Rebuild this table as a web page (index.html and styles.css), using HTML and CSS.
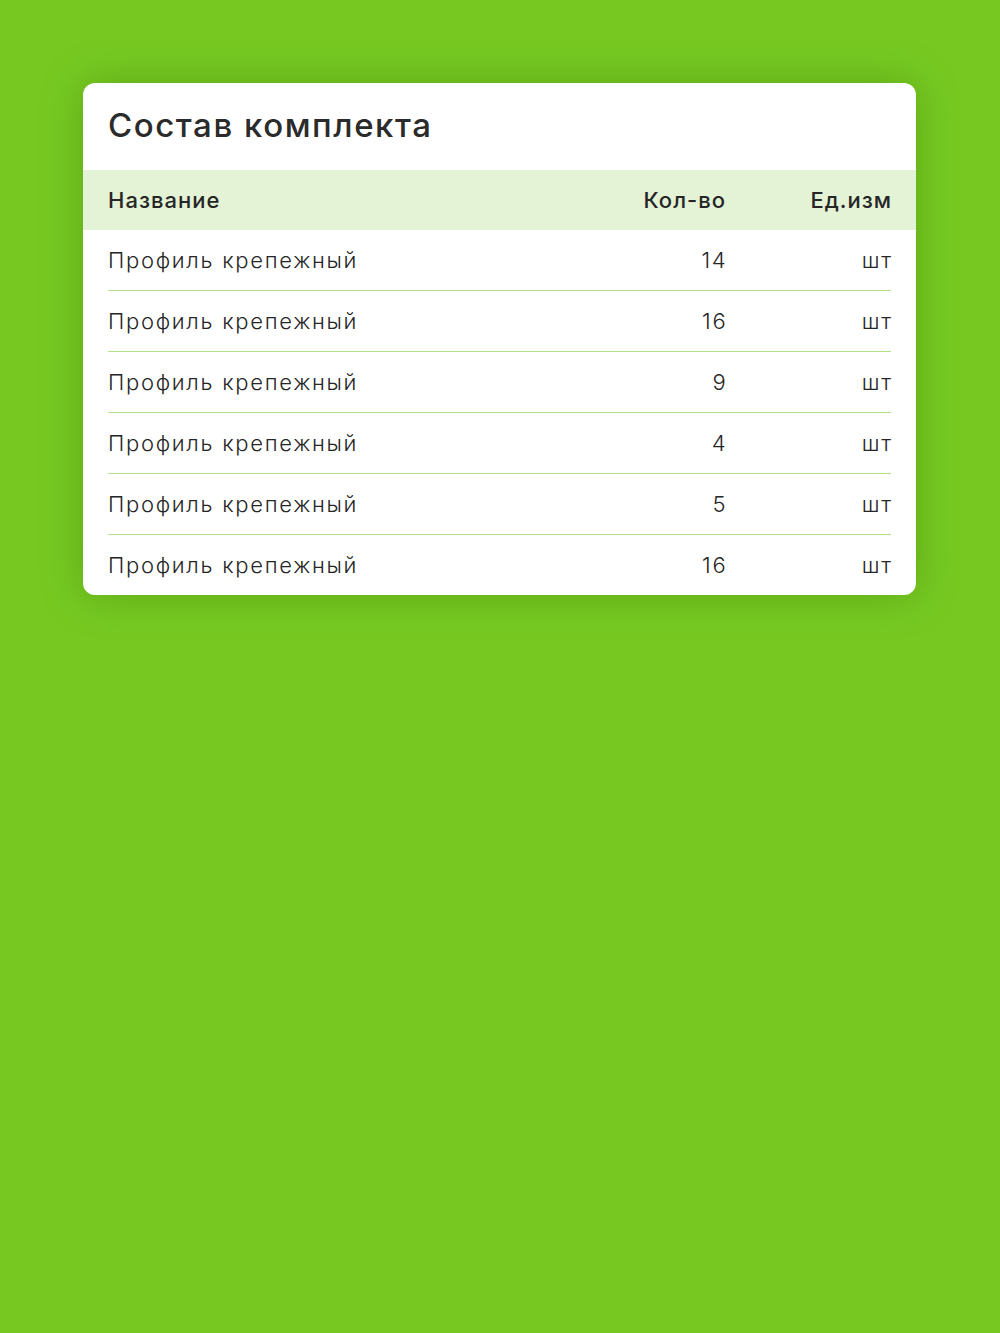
FILE: index.html
```html
<!DOCTYPE html>
<html lang="ru">
<head>
<meta charset="utf-8">
<title>Состав комплекта</title>
<link rel="stylesheet" href="styles.css">
</head>
<body>
<div class="page">
  <section class="card">
    <h1 class="title">Состав комплекта</h1>
    <div class="table">
      <div class="row head">
        <span class="c-name">Название</span>
        <span class="c-qty">Кол-во</span>
        <span class="c-unit">Ед.изм</span>
      </div>
      <div class="row"><span class="c-name">Профиль крепежный</span><span class="c-qty">14</span><span class="c-unit">шт</span></div>
      <div class="row"><span class="c-name">Профиль крепежный</span><span class="c-qty">16</span><span class="c-unit">шт</span></div>
      <div class="row"><span class="c-name">Профиль крепежный</span><span class="c-qty">9</span><span class="c-unit">шт</span></div>
      <div class="row"><span class="c-name">Профиль крепежный</span><span class="c-qty">4</span><span class="c-unit">шт</span></div>
      <div class="row"><span class="c-name">Профиль крепежный</span><span class="c-qty">5</span><span class="c-unit">шт</span></div>
      <div class="row"><span class="c-name">Профиль крепежный</span><span class="c-qty">16</span><span class="c-unit">шт</span></div>
    </div>
  </section>
</div>
</body>
</html>
```
FILE: styles.css
```css
html, body {
  margin: 0;
  padding: 0;
}
body {
  background: #77c922;
  font-family: Inter, "Noto Sans", sans-serif;
  color: #2b2b2b;
  width: 1000px;
  height: 1333px;
  overflow: hidden;
}
.page {
  padding: 83px 84px 0 83px;
}
.card {
  background: #ffffff;
  border-radius: 12px;
  box-shadow: 0 0 40px rgba(40, 110, 0, 0.35);
  overflow: hidden;
}
.title {
  margin: 0;
  height: 87px;
  padding: 20px 25px 0;
  box-sizing: border-box;
  font-size: 33px;
  font-weight: 500;
  letter-spacing: 1.55px;
  line-height: 44px;
  color: #2b2b2b;
}
.row {
  display: flex;
  align-items: center;
  height: 61px;
  margin: 0 25px;
  border-top: 1px solid #b4df8a;
  box-sizing: border-box;
  font-size: 22px;
  font-weight: 300;
  letter-spacing: 1.7px;
  color: #262626;
}
.row .c-qty, .row .c-unit {
  margin-right: -1.7px;
}
.row.head {
  height: 60px;
  margin: 0;
  padding: 0 25px;
  border-top: none;
  background: #e4f2d6;
  font-weight: 500;
  letter-spacing: 1px;
}
.row.head .c-qty, .row.head .c-unit {
  margin-right: -1px;
}
.row.head + .row {
  border-top: none;
  height: 60px;
}
.c-name {
  flex: 1;
}
.c-qty {
  width: 120px;
  text-align: right;
}
.c-unit {
  width: 167px;
  text-align: right;
}
```
